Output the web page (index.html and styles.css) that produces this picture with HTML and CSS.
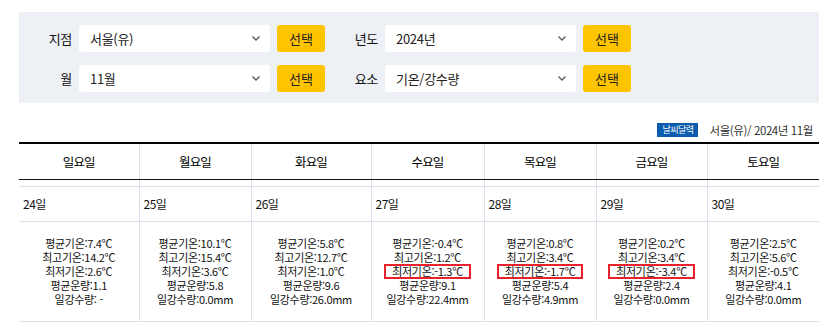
FILE: index.html
```html
<!DOCTYPE html>
<html lang="ko">
<head>
<meta charset="utf-8">
<link rel="stylesheet" href="styles.css">
</head>
<body>
<div class="page">
  <form class="search">
    <div class="row">
      <div class="field">
        <label class="lbl">지점</label>
        <div class="select"><span>서울(유)</span><svg class="chev" width="8" height="5" viewBox="0 0 8 5"><path d="M0.5 0.5 L4 4 L7.5 0.5" fill="none" stroke="#555" stroke-width="1.3"/></svg></div>
        <button type="button" class="btn">선택</button>
      </div>
      <div class="field">
        <label class="lbl">년도</label>
        <div class="select"><span>2024년</span><svg class="chev" width="8" height="5" viewBox="0 0 8 5"><path d="M0.5 0.5 L4 4 L7.5 0.5" fill="none" stroke="#555" stroke-width="1.3"/></svg></div>
        <button type="button" class="btn">선택</button>
      </div>
    </div>
    <div class="row">
      <div class="field">
        <label class="lbl">월</label>
        <div class="select"><span>11월</span><svg class="chev" width="8" height="5" viewBox="0 0 8 5"><path d="M0.5 0.5 L4 4 L7.5 0.5" fill="none" stroke="#555" stroke-width="1.3"/></svg></div>
        <button type="button" class="btn">선택</button>
      </div>
      <div class="field">
        <label class="lbl">요소</label>
        <div class="select"><span>기온/강수량</span><svg class="chev" width="8" height="5" viewBox="0 0 8 5"><path d="M0.5 0.5 L4 4 L7.5 0.5" fill="none" stroke="#555" stroke-width="1.3"/></svg></div>
        <button type="button" class="btn">선택</button>
      </div>
    </div>
  </form>

  <div class="caption">
    <span class="badge">날씨달력</span>
    <span class="loc">서울(유)/ 2024년 11월</span>
  </div>

  <table class="cal">
    <colgroup>
      <col class="c120"><col class="c112"><col class="c120"><col class="c113"><col class="c112"><col class="c111"><col class="c112">
    </colgroup>
    <thead>
      <tr>
        <th>일요일</th><th>월요일</th><th>화요일</th><th>수요일</th><th>목요일</th><th>금요일</th><th>토요일</th>
      </tr>
    </thead>
    <tbody>
      <tr class="spacer"><td></td><td></td><td></td><td></td><td></td><td></td><td></td></tr>
      <tr class="dates">
        <td>24일</td><td>25일</td><td>26일</td><td>27일</td><td>28일</td><td>29일</td><td>30일</td>
      </tr>
      <tr class="data">
        <td><div>평균기온:7.4℃</div><div>최고기온:14.2℃</div><div>최저기온:2.6℃</div><div>평균운량:1.1</div><div>일강수량: -</div></td>
        <td><div>평균기온:10.1℃</div><div>최고기온:15.4℃</div><div>최저기온:3.6℃</div><div>평균운량:5.8</div><div>일강수량:0.0mm</div></td>
        <td><div>평균기온:5.8℃</div><div>최고기온:12.7℃</div><div>최저기온:1.0℃</div><div>평균운량:9.6</div><div>일강수량:26.0mm</div></td>
        <td><div>평균기온:-0.4℃</div><div>최고기온:1.2℃</div><div><span class="hl">최저기온:-1.3℃</span></div><div>평균운량:9.1</div><div>일강수량:22.4mm</div></td>
        <td><div>평균기온:0.8℃</div><div>최고기온:3.4℃</div><div><span class="hl">최저기온:-1.7℃</span></div><div>평균운량:5.4</div><div>일강수량:4.9mm</div></td>
        <td><div>평균기온:0.2℃</div><div>최고기온:3.4℃</div><div><span class="hl">최저기온:-3.4℃</span></div><div>평균운량:2.4</div><div>일강수량:0.0mm</div></td>
        <td><div>평균기온:2.5℃</div><div>최고기온:5.6℃</div><div>최저기온:-0.5℃</div><div>평균운량:4.1</div><div>일강수량:0.0mm</div></td>
      </tr>
    </tbody>
  </table>
</div>
</body>
</html>
```

FILE: styles.css
```css
* { box-sizing: border-box; }
html, body { margin: 0; padding: 0; background: #fff; }
body {
  font-family: "Noto Sans CJK KR", "Noto Sans", sans-serif;
  color: #222;
}
.page {
  padding: 12px 12px 0 19px;
  width: 831px;
}
.search {
  width: 800px;
  height: 91px;
  background: #edf0f5;
  padding: 13px 0 0 13px;
  display: flex;
  flex-direction: column;
  gap: 13px;
  margin: 0;
}
.row { display: flex; gap: 13px; }
.field { display: flex; align-items: center; gap: 7px; }
.lbl {
  width: 40px;
  text-align: right;
  font-size: 13px;
  line-height: 27px;
  color: #111;
  letter-spacing: -0.3px;
}
.select {
  width: 191px;
  height: 27px;
  background: #fff;
  border-radius: 3px;
  display: flex;
  align-items: center;
  justify-content: space-between;
  padding: 0 10px 0 11px;
  font-size: 13px;
  color: #222;
  letter-spacing: -0.3px;
}
.chev { display: block; }
.btn {
  width: 48px;
  height: 27px;
  border: 0;
  border-radius: 3px;
  background: #ffc400;
  font-family: inherit;
  font-size: 13px;
  color: #222;
  padding: 0;
  line-height: 27px;
}
.caption {
  width: 800px;
  margin-top: 20px;
  height: 14px;
  display: flex;
  justify-content: flex-end;
  align-items: center;
  gap: 11px;
  padding-right: 6px;
}
.badge {
  background: #0b5cad;
  color: #fff;
  font-size: 9px;
  line-height: 14px;
  height: 14px;
  width: 41px;
  text-align: center;
  letter-spacing: -0.6px;
}
.loc {
  font-size: 11.5px;
  line-height: 14px;
  color: #333;
  letter-spacing: -0.4px;
}
.cal {
  margin-top: 5px;
  width: 800px;
  border-collapse: collapse;
  table-layout: fixed;
  border-top: 2px solid #000;
}
.c120 { width: 120px; }
.c112 { width: 112px; }
.c113 { width: 113px; }
.c111 { width: 111px; }
.cal th, .cal td {
  padding: 0;
  border-left: 1px solid #dde0ea;
}
.cal th:first-child, .cal td:first-child { border-left: 0; }
.cal th {
  height: 36px;
  font-weight: normal;
  font-size: 12.5px;
  letter-spacing: -0.8px;
  color: #000;
  border-bottom: 1px solid #111;
  text-align: center;
  vertical-align: middle;
}
.spacer td { height: 7px; border-bottom: 1px solid #dde0ea; }
.dates td {
  height: 35px;
  font-size: 12px;
  letter-spacing: -0.5px;
  padding-left: 4px;
  vertical-align: middle;
  border-bottom: 1px solid #dde0ea;
  color: #111;
}
.data td {
  height: 100px;
  font-size: 11px;
  line-height: 14px;
  letter-spacing: -0.3px;
  text-align: center;
  vertical-align: middle;
  border-bottom: 1px solid #dde0ea;
  color: #111;
}
.data td div { height: 14px; white-space: nowrap; }
.hl {
  display: inline-block;
  border: 2px solid #e8212a;
  padding: 0 6px;
  vertical-align: top;
  height: 15px;
  line-height: 11px;
}
```
